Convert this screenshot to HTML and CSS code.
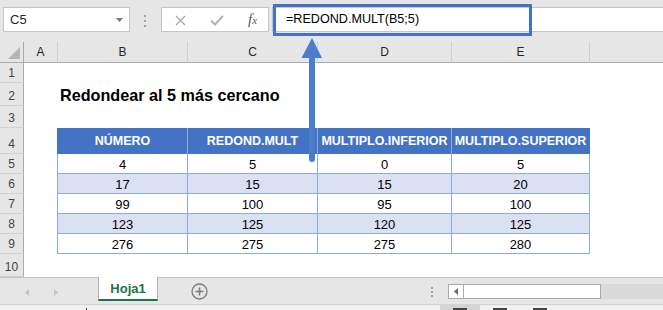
FILE: index.html
```html
<!DOCTYPE html>
<html lang="es">
<head>
<meta charset="utf-8">
<title>Redondear al 5 más cercano</title>
<link rel="stylesheet" href="styles.css">
</head>
<body>
<div class="app">
  <div class="formula-bar">
    <div class="name-box">
      <span>C5</span>
      <svg class="caret" width="7" height="4" viewBox="0 0 7 4"><path d="M0 0H7L3.5 4Z" fill="#7a7a7a"/></svg>
    </div>
    <div class="grip"><i></i><i></i><i></i></div>
    <div class="fx-buttons">
      <svg class="btn-cancel" width="11" height="11" viewBox="0 0 11 11"><path d="M1 1L10 10M10 1L1 10" stroke="#a9a9a9" stroke-width="1.3" fill="none"/></svg>
      <svg class="btn-enter" width="14" height="11" viewBox="0 0 14 11"><path d="M1 5.5L5 9.5L13 1" stroke="#b2b2b2" stroke-width="2" fill="none"/></svg>
      <span class="fx">f<small>x</small></span>
    </div>
    <div class="formula-input">=REDOND.MULT(B5;5)</div>
  </div>

  <div class="sheet">
    <div class="row hdr">
      <div class="corner"><svg width="14" height="14" viewBox="0 0 14 14"><path d="M13 1V13H1Z" fill="#b5b5b5"/></svg></div>
      <div class="ch">A</div>
      <div class="ch">B</div>
      <div class="ch">C</div>
      <div class="ch">D</div>
      <div class="ch">E</div>
      <div class="ch last"></div>
    </div>
    <div class="row r1"><div class="rh">1</div></div>
    <div class="row r2"><div class="rh">2</div><div></div><div class="title">Redondear al 5 más cercano</div></div>
    <div class="row r3"><div class="rh">3</div></div>
    <div class="row r4">
      <div class="rh">4</div>
      <div class="edge head"></div>
      <div class="th">NÚMERO</div>
      <div class="th">REDOND.MULT</div>
      <div class="th">MULTIPLO.INFERIOR</div>
      <div class="th end">MULTIPLO.SUPERIOR</div>
    </div>
    <div class="row rb">
      <div class="rh">5</div><div class="edge"></div>
      <div class="td">4</div><div class="td">5</div><div class="td">0</div><div class="td">5</div>
    </div>
    <div class="row rb band">
      <div class="rh">6</div><div class="edge"></div>
      <div class="td">17</div><div class="td">15</div><div class="td">15</div><div class="td">20</div>
    </div>
    <div class="row rb">
      <div class="rh">7</div><div class="edge"></div>
      <div class="td">99</div><div class="td">100</div><div class="td">95</div><div class="td">100</div>
    </div>
    <div class="row rb band">
      <div class="rh">8</div><div class="edge"></div>
      <div class="td">123</div><div class="td">125</div><div class="td">120</div><div class="td">125</div>
    </div>
    <div class="row rb">
      <div class="rh">9</div><div class="edge"></div>
      <div class="td">276</div><div class="td">275</div><div class="td">275</div><div class="td">280</div>
    </div>
    <div class="row r10"><div class="rh">10</div></div>
  </div>

  <div class="tabs">
    <div class="tab-nav">
      <svg class="nav-l" width="4" height="7" viewBox="0 0 4 7"><path d="M4 0V7L0 3.5Z" fill="#c4c4c4"/></svg>
      <svg class="nav-r" width="4" height="7" viewBox="0 0 4 7"><path d="M0 0V7L4 3.5Z" fill="#c4c4c4"/></svg>
    </div>
    <div class="sheet-tab">Hoja1</div>
    <svg class="add-sheet" width="17" height="17" viewBox="0 0 17 17"><circle cx="8.5" cy="8.5" r="7.5" fill="none" stroke="#7d7d7d" stroke-width="1.3"/><path d="M8.5 4.5V12.5M4.5 8.5H12.5" stroke="#7d7d7d" stroke-width="1.6"/></svg>
    <div class="spacer"></div>
    <div class="grip-v"><i></i><i></i><i></i></div>
    <div class="hscroll">
      <div class="hs-btn"><svg width="4" height="7" viewBox="0 0 4 7"><path d="M4 0V7L0 3.5Z" fill="#6a6a6a"/></svg></div>
    </div>
    <div class="track"></div>
  </div>

  <div class="status">
    <i class="tick"></i>
    <div class="spacer"></div>
    <div class="views">
      <div class="view active"><i></i></div>
      <div class="view"><i></i></div>
      <div class="view"><i></i></div>
    </div>
    <div class="status-rest"></div>
  </div>

  <div class="highlight"></div>
  <svg class="arrow" width="24" height="130" viewBox="0 0 24 130">
    <path d="M12 22V123" stroke="#4c7ccc" stroke-width="6" stroke-linecap="round" fill="none"/>
    <path d="M12 2L22 22H1.5Z" fill="#4c7ccc"/>
  </svg>
</div>
</body>
</html>
```

FILE: styles.css
```css
* { box-sizing: border-box; margin: 0; padding: 0; }

html, body {
  width: 663px;
  height: 310px;
  overflow: hidden;
}

body {
  font-family: "Liberation Sans", Arial, sans-serif;
  background: #e6e6e6;
  color: #000;
}

.app {
  position: relative;
  width: 663px;
  height: 310px;
  display: flex;
  flex-direction: column;
}

/* ---------- formula bar ---------- */
.formula-bar {
  flex: none;
  height: 42px;
  display: flex;
  align-items: flex-start;
  padding: 7px 0 0 3px;
}

.name-box {
  width: 127px;
  height: 25px;
  background: #fff;
  border: 1px solid #c6c6c6;
  display: flex;
  align-items: center;
  justify-content: space-between;
  padding: 0 6px;
  font-size: 13px;
  color: #262626;
}

.grip {
  margin: 8px 0 0 14px;
  display: flex;
  flex-direction: column;
  gap: 3px;
}
.grip i, .grip-v i {
  display: block;
  width: 2px;
  height: 2px;
  background: #a3a3a3;
}

.fx-buttons {
  margin-left: 15px;
  width: 108px;
  height: 25px;
  background: #fff;
  border: 1px solid #c6c6c6;
  display: flex;
  align-items: center;
  padding-left: 13px;
}
.btn-cancel { margin-top: 1px; }
.btn-enter { margin-left: 24px; margin-top: 2px; }
.fx {
  margin-left: 24px;
  font-family: "Liberation Serif", "Times New Roman", serif;
  font-style: italic;
  font-size: 15px;
  color: #555;
  line-height: 1;
}
.fx small { font-size: 11px; }

.formula-input {
  margin-left: 3px;
  flex: 1;
  height: 25px;
  background: #fff;
  border: 1px solid #c6c6c6;
  border-right: none;
  padding-left: 13px;
  font-size: 12.6px;
  line-height: 23px;
  color: #000;
  white-space: nowrap;
}

/* ---------- sheet ---------- */
.sheet {
  flex: none;
  background: #fff;
}

.row {
  display: grid;
  grid-template-columns: 24px 34px 130px 130px 134px 138px 1fr;
  height: 20px;
}
.row.hdr { height: 21px; }
.row.r2 { height: 23px; }
.row.r3 { height: 22px; }
.row.r4 { height: 26px; }
.row.r10 { height: 23px; }

.corner {
  background: #e6e6e6;
  border-right: 1px solid #ababab;
  border-bottom: 1px solid #ababab;
  display: flex;
  align-items: flex-end;
  justify-content: flex-end;
  padding: 0 2px 2px 0;
}

.ch {
  background: #e6e6e6;
  border-right: 1px solid #cfcfcf;
  border-bottom: 1px solid #ababab;
  text-align: center;
  font-size: 12px;
  line-height: 20px;
  color: #262626;
}
.ch.last { border-right: none; }

.rh {
  background: #e6e6e6;
  border-right: 1px solid #ababab;
  border-bottom: 1px solid #d2d2d2;
  display: flex;
  flex-direction: column;
  justify-content: flex-end;
  align-items: center;
  font-size: 12px;
  line-height: 16px;
  padding-bottom: 1px;
  color: #444;
}

.title {
  font-weight: bold;
  font-size: 16.2px;
  line-height: 21px;
  padding: 2px 0 0 2px;
  white-space: nowrap;
}

.edge { border-right: 1px solid #8eaadb; }
.edge.head { border-right-color: #4472c4; }

.th {
  background: #4472c4;
  color: #fff;
  font-weight: bold;
  font-size: 12.5px;
  text-align: center;
  line-height: 25px;
  padding-top: 1px;
  border-right: 1px solid #8eaadb;
  white-space: nowrap;
}
.th.end { border-right-color: #4472c4; }

.td {
  background: #fff;
  border-right: 1px solid #8eaadb;
  border-bottom: 1px solid #8eaadb;
  text-align: center;
  font-size: 13px;
  line-height: 17px;
  padding-top: 2px;
}
.band .td { background: #d9e1f2; }

/* ---------- sheet tabs ---------- */
.tabs {
  flex: none;
  height: 27px;
  border-top: 1px solid #c3c3c3;
  display: flex;
  align-items: center;
}

.tab-nav {
  width: 98px;
  align-self: stretch;
  display: flex;
  align-items: center;
  padding: 2px 0 0 25px;
}
.nav-r { margin-left: 25px; }

.sheet-tab {
  align-self: flex-start;
  margin-top: -1px;
  width: 60px;
  height: 24px;
  background: #fff;
  border-left: 1px solid #b5b5b5;
  border-right: 1px solid #b5b5b5;
  border-bottom: 2px solid #217346;
  text-align: center;
  font-weight: bold;
  font-size: 13px;
  line-height: 21px;
  padding-top: 1px;
  color: #217346;
}

.add-sheet { margin-left: 33px; margin-top: 1px; }

.spacer { flex: 1; }

.grip-v {
  display: flex;
  flex-direction: column;
  gap: 2px;
  margin-top: 1px;
}

.hscroll {
  margin-left: 15px;
  width: 153px;
  height: 15px;
  background: #fff;
  border: 1px solid #ababab;
  display: flex;
}
.hs-btn {
  width: 15px;
  border-right: 1px solid #ababab;
  display: flex;
  align-items: center;
  justify-content: center;
  padding-top: 1px;
}

.track {
  width: 62px;
  height: 15px;
  background: #dadada;
}

/* ---------- status bar ---------- */
.status {
  flex: 1;
  border-top: 1px solid #d2d2d2;
  background: #f1f1f1;
  display: flex;
}
.tick {
  display: block;
  margin: 3px 0 0 86px;
  width: 1px;
  height: 3px;
  background: #444;
}
.views { display: flex; }
.view {
  width: 40px;
  display: flex;
  justify-content: center;
  padding-top: 3px;
}
.view.active { background: #d4d4d4; }
.view i {
  display: block;
  width: 14px;
  height: 4px;
  background: #444;
}
.status-rest { width: 103px; }

/* ---------- annotation overlays ---------- */
.highlight {
  position: absolute;
  left: 273px;
  top: 4px;
  width: 259px;
  height: 32px;
  border: 3px solid #4472c4;
}

.arrow {
  position: absolute;
  left: 300px;
  top: 36px;
}
```
